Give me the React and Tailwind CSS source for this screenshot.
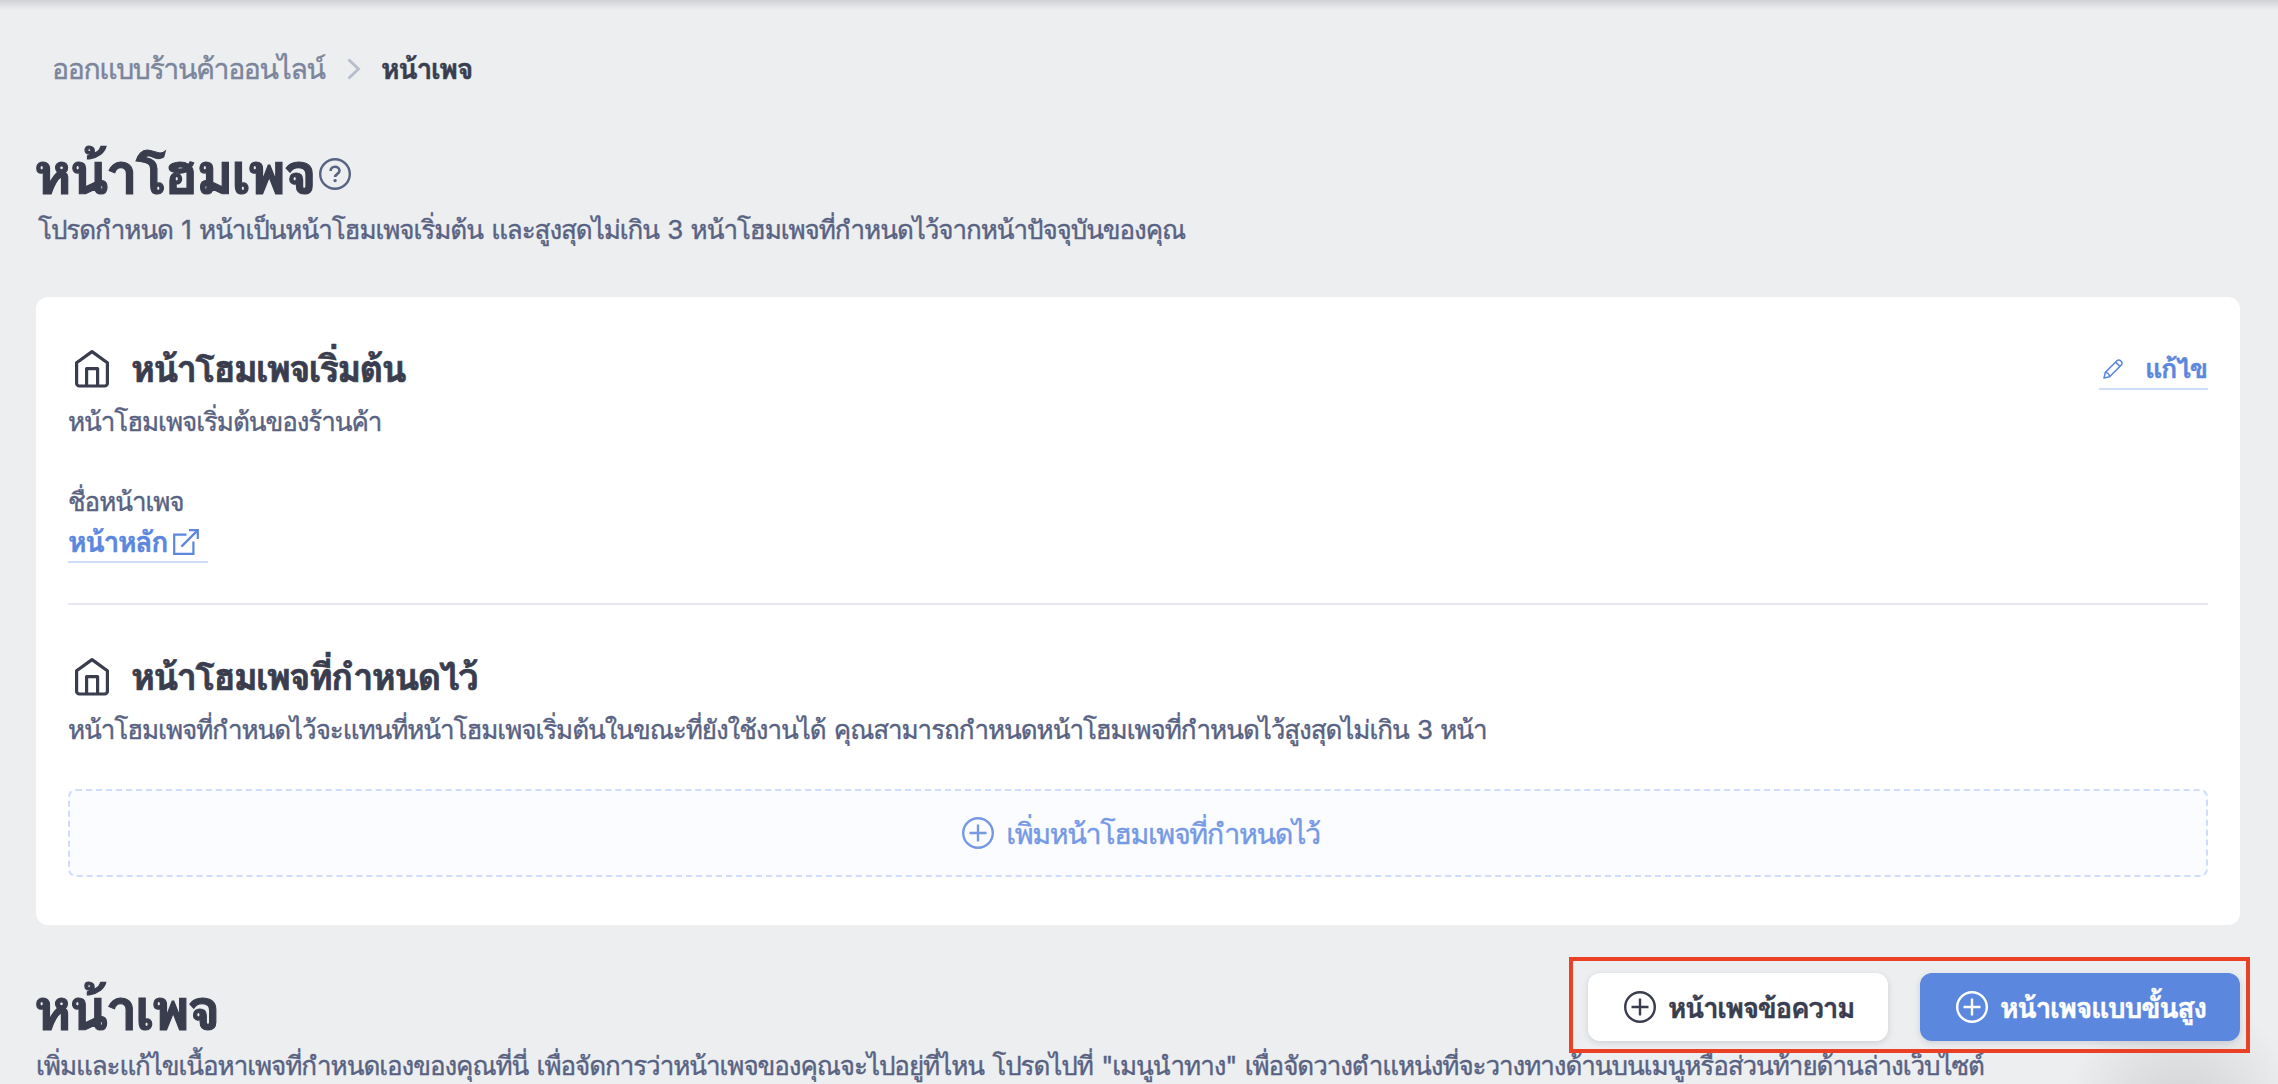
import React from 'react';

const HomeIcon = () => (
    <svg width="36" height="40" viewBox="0 0 36 40" fill="none" stroke="currentColor" strokeWidth="3.2" strokeLinejoin="round" className="shrink-0">
        <path d="M2.6 13.8 18 2.6l15.4 11.2v20.4a2.8 2.8 0 0 1-2.8 2.8H5.4a2.8 2.8 0 0 1-2.8-2.8z" />
        <path d="M12.6 37V19.6h11V37" />
    </svg>
);

const PlusCircle = () => (
    <svg width="32" height="32" viewBox="0 0 32 32" fill="none" stroke="currentColor" strokeWidth="2.4" className="shrink-0">
        <circle cx="16" cy="16" r="14.8" />
        <path d="M16 7.5v17M7.5 16h17" />
    </svg>
);

const HelpIcon = () => (
    <svg width="32" height="32" viewBox="0 0 32 32" fill="none" stroke="currentColor" className="mt-px shrink-0">
        <circle cx="16" cy="16" r="14.8" strokeWidth="2.4" />
        <path d="M11.6 13c0-2.5 1.8-4.2 4.4-4.2s4.5 1.6 4.5 3.9c0 3.1-4.4 3.2-4.4 6.3" strokeWidth="2.6" />
        <circle cx="16.1" cy="22.6" r="1.7" fill="currentColor" stroke="none" />
    </svg>
);

const ExternalIcon = () => (
    <svg width="26" height="26" viewBox="0 0 26 26" fill="none" stroke="currentColor" strokeWidth="2.2" className="shrink-0">
        <path d="M13.5 5.6H1.2v19.2h19.2V12.5" />
        <path d="M16 1.2h8.8V10M24.6 1.4 8.4 17.6" />
    </svg>
);

const PencilIcon = () => (
    <svg width="20" height="20" viewBox="0 0 20 20" fill="none" stroke="currentColor" strokeWidth="1.5" strokeLinejoin="round" className="shrink-0">
        <path d="M1 19l1.3-5.6L13.9 1.8a2.6 2.6 0 0 1 3.7 0l.6.6a2.6 2.6 0 0 1 0 3.7L6.6 17.7z" />
        <path d="M2.3 13.4c2.2.2 4.1 2.1 4.3 4.3M12.6 3.1l4.3 4.3" />
    </svg>
);

const SectionTitle = ({ children }) => (
    <div className="flex h-12 items-center text-[#393d4e]">
        <div className="mb-0.5 ml-1.5 h-10"><HomeIcon /></div>
        <h2 className="mb-0.5 ml-[21px] text-[36.6px] leading-[48px] font-bold tracking-[-0.049em] [-webkit-text-stroke:0.7px]">{children}</h2>
    </div>
);

export default function App() {
    return (
        <div className="relative h-[1084px] w-full overflow-hidden bg-[#eceef0] px-9 font-['Inter','Loma','Liberation_Sans',sans-serif] whitespace-nowrap text-[#586282] [-webkit-text-stroke:0.4px]">
            <div className="absolute inset-x-0 top-0 h-2.5 bg-linear-to-b from-[#cfd1d4] to-[#eceef0]" />

            <nav className="flex h-[89px] items-end pl-4 text-[28.4px] leading-10">
                <span className="w-[295px] tracking-[-0.048em] text-[#7b859b]">ออกแบบร้านค้าออนไลน์</span>
                <svg width="14" height="22" viewBox="0 0 14 22" fill="none" stroke="#b6bdcb" strokeWidth="2.8" className="mb-[9px]">
                    <path d="M1.5 1.5 11.5 11 1.5 20.5" />
                </svg>
                <span className="ml-5 font-bold tracking-[-0.048em] text-[#393d4e]">หน้าเพจ</span>
            </nav>

            <div className="mt-12 flex h-[72px] items-center">
                <h1 className="-ml-0.5 w-[285px] text-[57.6px] leading-[72px] font-bold tracking-[-0.048em] text-[#393d4e] [-webkit-text-stroke:1.2px]">หน้าโฮมเพจ</h1>
                <HelpIcon />
            </div>
            <p className="mt-[3px] pl-0.5 text-[26px] leading-9 tracking-[-0.041em] [word-spacing:0.08em]">
                โปรดกำหนด 1 หน้าเป็นหน้าโฮมเพจเริ่มต้น และสูงสุดไม่เกิน 3 หน้าโฮมเพจที่กำหนดไว้จากหน้าปัจจุบันของคุณ
            </p>

            <main className="mt-[49px] mr-0.5 h-[628px] rounded-xl bg-white px-8 pt-[49px]">
                <div className="flex justify-between">
                    <SectionTitle>หน้าโฮมเพจเริ่มต้น</SectionTitle>
                    <a href="#" className="mt-1.5 flex h-[38px] w-[109px] items-center justify-between border-b-2 border-[#cfddfb] pr-px pb-0.5 pl-1 text-[27px] leading-9 font-bold tracking-[-0.048em] text-[#5b87df]">
                        <PencilIcon />
                        <span>แก้ไข</span>
                    </a>
                </div>
                <p className="mt-2.5 text-[26px] leading-9 tracking-[-0.041em]">หน้าโฮมเพจเริ่มต้นของร้านค้า</p>
                <p className="mt-11 text-[26px] leading-9 tracking-[-0.041em]">ชื่อหน้าเพจ</p>
                <a href="#" className="mt-[5px] flex h-[38px] w-[140px] items-center border-b-2 border-[#cfddfb] pb-0.5 text-[28.4px] leading-9 font-bold tracking-[-0.048em] text-[#5b87df]">
                    <span className="w-[105px]">หน้าหลัก</span>
                    <ExternalIcon />
                </a>

                <hr className="mt-10 mb-[49px] border-t-2 border-[#e6e8ee]" />

                <SectionTitle>หน้าโฮมเพจที่กำหนดไว้</SectionTitle>
                <p className="mt-2.5 text-[26px] leading-9 tracking-[-0.041em] [word-spacing:0.08em]">
                    หน้าโฮมเพจที่กำหนดไว้จะแทนที่หน้าโฮมเพจเริ่มต้นในขณะที่ยังใช้งานได้ คุณสามารถกำหนดหน้าโฮมเพจที่กำหนดไว้สูงสุดไม่เกิน 3 หน้า
                </p>
                <button className="mt-[41px] flex h-[88px] w-full items-center justify-center gap-3 rounded-lg border-2 border-dashed border-[#cfddfb] bg-[#fafcff] pl-1.5 text-[28.7px] tracking-[-0.048em] text-[#7599e5]">
                    <PlusCircle />
                    <span className="pt-0.5">เพิ่มหน้าโฮมเพจที่กำหนดไว้</span>
                </button>
            </main>

            <div className="mt-12 mr-0.5 flex h-[72px] items-start justify-between">
                <h1 className="-ml-0.5 text-[57.4px] leading-[72px] font-bold tracking-[-0.048em] text-[#393d4e] [-webkit-text-stroke:1.2px]">หน้าเพจ</h1>
                <div className="relative z-10 flex gap-8">
                    <button className="flex h-[68px] w-[300px] items-center gap-3 rounded-xl bg-white pl-9 text-[28px] font-bold tracking-[-0.048em] text-[#393d4e] shadow-[0_2px_6px_rgba(57,61,78,0.16)]">
                        <PlusCircle />
                        <span className="pt-0.5">หน้าเพจข้อความ</span>
                    </button>
                    <button className="flex h-[68px] w-80 items-center gap-3 rounded-xl bg-[#5b87df] pl-9 text-[28.4px] font-bold tracking-[-0.048em] text-white shadow-[0_2px_6px_rgba(57,61,78,0.16)]">
                        <PlusCircle />
                        <span className="pt-0.5">หน้าเพจแบบขั้นสูง</span>
                    </button>
                    <div className="pointer-events-none absolute -top-4 -right-2.5 -left-[19px] h-24 border-4 border-[#ea4025]" />
                </div>
            </div>
            <p className="mt-[3px] text-[26px] leading-9 tracking-[-0.041em] [word-spacing:0.08em]">
                เพิ่มและแก้ไขเนื้อหาเพจที่กำหนดเองของคุณที่นี่ เพื่อจัดการว่าหน้าเพจของคุณจะไปอยู่ที่ไหน โปรดไปที่ "เมนูนำทาง" เพื่อจัดวางตำแหน่งที่จะวางทางด้านบนเมนูหรือส่วนท้ายด้านล่างเว็บไซต์
            </p>

            {/* soft shadow of the floating chat bubble below the fold */}
            <div className="absolute -right-6 -bottom-[150px] size-60 rounded-full bg-radial from-black/12 to-transparent to-70%" />
        </div>
    );
}
